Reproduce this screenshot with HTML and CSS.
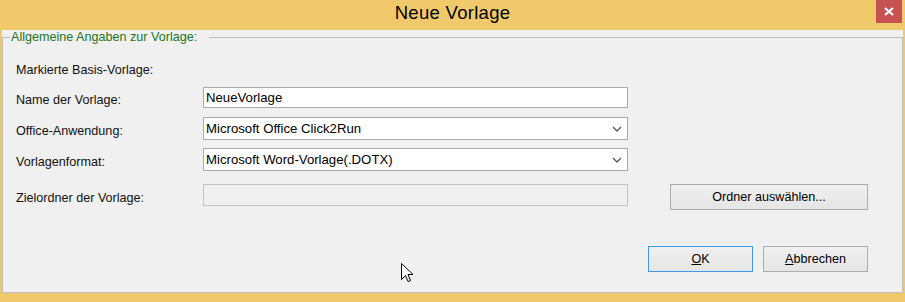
FILE: index.html
```html
<!DOCTYPE html>
<html lang="de">
<head>
    <meta charset="UTF-8">
    <title>Neue Vorlage</title>
    <link rel="stylesheet" href="styles.css">
</head>
<body>
    <div class="window">
        <div class="titlebar">
            <span></span>
            <span class="title">Neue Vorlage</span>
            <div class="close">
                <svg width="10" height="9" viewBox="0 0 10 9">
                    <path d="M1,1 L9,8 M9,1 L1,8" stroke="#fff" stroke-width="2.2" fill="none" />
                </svg>
            </div>
        </div>

        <div class="client">
            <fieldset class="group">
                <legend>Allgemeine Angaben zur Vorlage:</legend>

                <div class="row row-base">
                    <span class="label">Markierte Basis-Vorlage:</span>
                </div>

                <div class="row row-name">
                    <span class="label">Name der Vorlage:</span>
                    <div class="field textbox">NeueVorlage</div>
                </div>

                <div class="row row-combo">
                    <span class="label">Office-Anwendung:</span>
                    <div class="field combo">
                        <span>Microsoft Office Click2Run</span>
                        <svg class="chevron" width="10" height="6" viewBox="0 0 10 6">
                            <path d="M1,1 L5,5 L9,1" stroke="#5a5a5a" stroke-width="1.4" fill="none" />
                        </svg>
                    </div>
                </div>

                <div class="row row-combo row-format">
                    <span class="label">Vorlagenformat:</span>
                    <div class="field combo">
                        <span>Microsoft Word-Vorlage(.DOTX)</span>
                        <svg class="chevron" width="10" height="6" viewBox="0 0 10 6">
                            <path d="M1,1 L5,5 L9,1" stroke="#5a5a5a" stroke-width="1.4" fill="none" />
                        </svg>
                    </div>
                </div>

                <div class="row row-folder">
                    <span class="label">Zielordner der Vorlage:</span>
                    <div class="field textbox disabled"></div>
                    <div class="btn btn-folder">Ordner auswählen...</div>
                </div>

                <div class="footer">
                    <div class="btn btn-default"><u>O</u>K</div>
                    <div class="btn"><u>A</u>bbrechen</div>
                </div>
            </fieldset>
        </div>

        <svg class="cursor" width="13" height="20" viewBox="0 0 13 20">
            <path d="M0.5,0.5 L0.5,16.5 L4.5,12.5 L7,18.5 L9.5,17.5 L7,11.5 L12,11.5 Z" fill="#fff" stroke="#000" stroke-width="1" />
        </svg>
    </div>
</body>
</html>
```

FILE: styles.css
```css
:root {
    --frame: #f0c96b;
    --face: #f0f0f0;
    --line: #bdbdbd;
    --text: #111;
}
body {
    margin: 0;
    padding: 0;
    font-family: 'Liberation Sans', Arial, sans-serif;
    font-size: 12.6px;
    color: var(--text);
}
.window {
    position: relative;
    width: 905px;
    height: 302px;
    background-color: var(--frame);
    display: flex;
    flex-direction: column;
    box-sizing: border-box;
    padding-bottom: 9px;
}
.titlebar {
    height: 30px;
    flex: none;
    display: grid;
    grid-template-columns: 1fr auto 1fr;
}
.title {
    font-size: 18.5px;
    line-height: 26px;
    color: #000;
    letter-spacing: 0.3px;
}
.close {
    justify-self: end;
    margin-right: 3px;
    width: 26px;
    height: 23px;
    background-color: #c75050;
    display: flex;
    align-items: center;
    justify-content: center;
}
.client {
    flex: 1;
    margin: 0 2px;
    background-color: var(--face);
    display: flex;
}
.group {
    flex: 1;
    margin: 0;
    padding: 0 34px 0 13px;
    border: 1px solid var(--line);
    min-width: 0;
}
.group legend {
    margin-left: -6px;
    padding: 0 12px 0 1px;
    line-height: 14px;
    color: #227522;
}
.row {
    display: flex;
    align-items: center;
}
.label {
    width: 187px;
    flex: none;
    padding-top: 4px;
}
.row-base {
    margin-top: 19px;
    height: 14px;
}
.row-base .label {
    padding-top: 0;
}
.row-name {
    margin-top: 10px;
    height: 21px;
}
.row-combo {
    margin-top: 9px;
    height: 23px;
}
.row-format {
    margin-top: 8px;
}
.row-folder {
    margin-top: 13px;
    height: 26px;
    align-items: flex-start;
}
.row-folder .label {
    padding-top: 7px;
}
.field {
    width: 425px;
    height: 100%;
    box-sizing: border-box;
    background-color: #fff;
    border: 1px solid #ababab;
    padding: 0 2px;
    display: flex;
    align-items: center;
    font-size: 13.2px;
    color: #000;
}
.combo {
    justify-content: space-between;
    padding-right: 5px;
}
.textbox.disabled {
    height: 22px;
    background-color: var(--face);
    border-color: #c4c4c4;
}
.btn {
    width: 105px;
    height: 26px;
    box-sizing: border-box;
    border: 1px solid #acacac;
    background: linear-gradient(#f0f0f0, #e5e5e5);
    display: flex;
    align-items: center;
    justify-content: center;
    color: #000;
}
.btn-folder {
    width: 198px;
    margin-left: 42px;
}
.btn-default {
    border-color: #3c9ae8;
}
.footer {
    margin-top: 36px;
    display: flex;
    justify-content: flex-end;
    gap: 10px;
}
.cursor {
    position: absolute;
    left: 401px;
    top: 263px;
}
```
